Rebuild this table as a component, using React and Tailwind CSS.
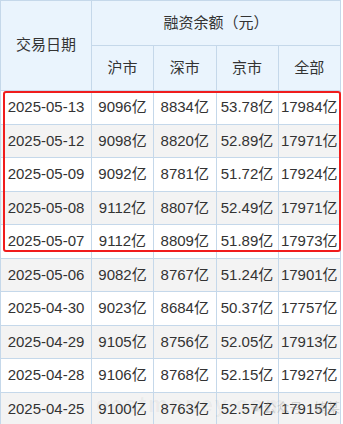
const rows = [
  ["2025-05-13", "9096亿", "8834亿", "53.78亿", "17984亿"],
  ["2025-05-12", "9098亿", "8820亿", "52.89亿", "17971亿"],
  ["2025-05-09", "9092亿", "8781亿", "51.72亿", "17924亿"],
  ["2025-05-08", "9112亿", "8807亿", "52.49亿", "17971亿"],
  ["2025-05-07", "9112亿", "8809亿", "51.89亿", "17973亿"],
  ["2025-05-06", "9082亿", "8767亿", "51.24亿", "17901亿"],
  ["2025-04-30", "9023亿", "8684亿", "50.37亿", "17757亿"],
  ["2025-04-29", "9105亿", "8756亿", "52.05亿", "17913亿"],
  ["2025-04-28", "9106亿", "8768亿", "52.15亿", "17927亿"],
  ["2025-04-25", "9100亿", "8763亿", "52.57亿", "17915亿"],
];

const font = { fontFamily: '"Liberation Sans", "Noto Sans CJK SC", sans-serif' };

export default function App() {
  return (
    <div className="relative w-[343px] h-[424px] overflow-hidden bg-white text-[#333] text-[15px]" style={font}>
      <table className="border-collapse table-fixed w-[340px]">
        <colgroup>
          <col className="w-[91px]" />
          <col className="w-[62px]" />
          <col className="w-[62.5px]" />
          <col className="w-[62px]" />
          <col className="w-[62.5px]" />
        </colgroup>
        <thead className="bg-[#eaf4fd]">
          <tr className="h-[45px]">
            <th rowSpan={2} className="border border-[#c5d8ea] font-normal">交易日期</th>
            <th colSpan={4} className="border border-[#c5d8ea] font-normal">融资余额（元）</th>
          </tr>
          <tr className="h-[45px]">
            <th className="border border-[#c5d8ea] font-normal">沪市</th>
            <th className="border border-[#c5d8ea] font-normal">深市</th>
            <th className="border border-[#c5d8ea] font-normal">京市</th>
            <th className="border border-[#c5d8ea] font-normal">全部</th>
          </tr>
        </thead>
        <tbody>
          {rows.map((r, i) => (
            <tr key={r[0]} className={`h-[33.5px] ${i % 2 ? "bg-[#f3f3f3]" : "bg-white"}`}>
              {r.map((c, j) => (
                <td key={j} className="border border-[#c5d8ea] text-center whitespace-nowrap p-0">
                  {c}
                </td>
              ))}
            </tr>
          ))}
        </tbody>
      </table>

      <div className="absolute left-[3px] top-[91px] w-[338px] h-[161px] border-2 border-[#f01c1c] rounded-[3px] pointer-events-none" />

      <div className="absolute left-[96px] top-[388px] text-[22px] font-bold tracking-[2px] text-[#000]/[0.05] pointer-events-none">
        eastmoney.com
      </div>
      <div className="absolute left-[252px] top-[398px] text-[13px] text-[#999]/40 pointer-events-none">
        ● 公众号 · 楠某
      </div>
    </div>
  );
}
